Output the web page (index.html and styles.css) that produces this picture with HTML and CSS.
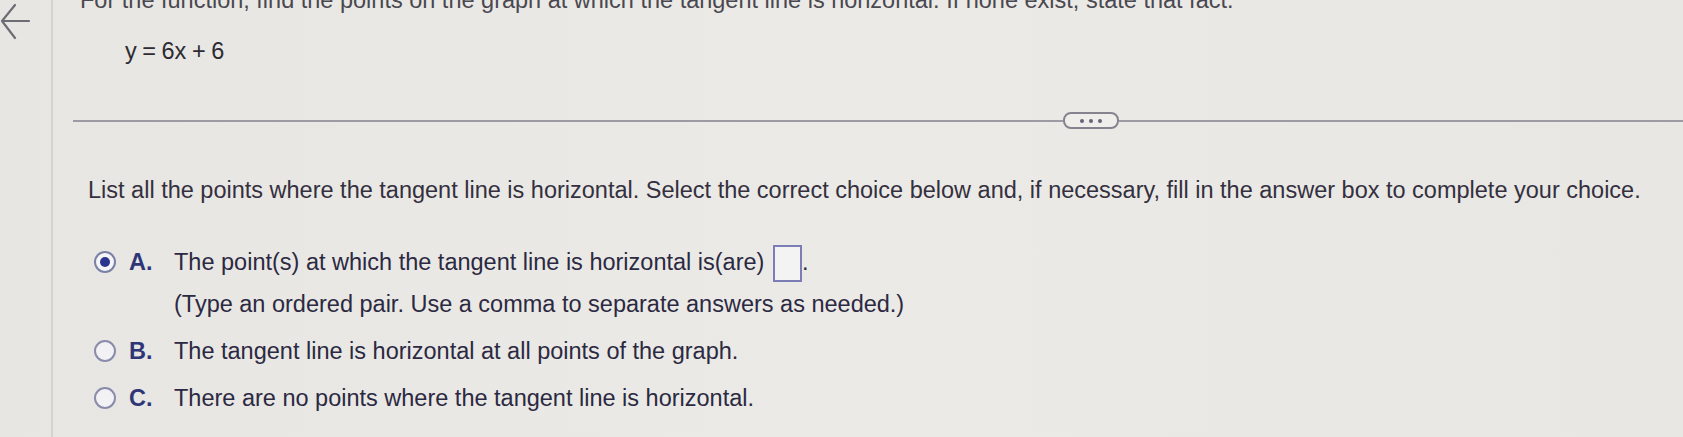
FILE: index.html
```html
<!DOCTYPE html>
<html lang="en">
<head>
    <meta charset="UTF-8">
    <title>Horizontal tangent</title>
    <link rel="stylesheet" href="styles.css">
</head>
<body>
    <div class="page">
        <div class="side">
            <svg class="back" width="30" height="42" viewBox="0 0 30 42">
                <path d="M29 21 H2 M15 5 L2 21 L15 38" fill="none" stroke="#6d6d74" stroke-width="2.2" stroke-linecap="round" stroke-linejoin="round"/>
            </svg>
        </div>
        <div class="main">
            <p class="intro">For the function, find the points on the graph at which the tangent line is horizontal. If none exist, state that fact.</p>
            <div class="equation">y = 6x + 6</div>

            <div class="divider">
                <span class="rule left"></span>
                <span class="more"><i></i><i></i><i></i></span>
                <span class="rule"></span>
            </div>

            <p class="question">List all the points where the tangent line is horizontal. Select the correct choice below and, if necessary, fill in the answer box to complete your choice.</p>

            <div class="choices">
                <div class="choice">
                    <span class="radio checked"></span>
                    <span class="letter">A.</span>
                    <div class="text">
                        <div class="line">The point(s) at which the tangent line is horizontal is(are) <span class="answer"></span>.</div>
                        <div>(Type an ordered pair. Use a comma to separate answers as needed.)</div>
                    </div>
                </div>
                <div class="choice">
                    <span class="radio"></span>
                    <span class="letter">B.</span>
                    <div class="text">The tangent line is horizontal at all points of the graph.</div>
                </div>
                <div class="choice">
                    <span class="radio"></span>
                    <span class="letter">C.</span>
                    <div class="text">There are no points where the tangent line is horizontal.</div>
                </div>
            </div>
        </div>
    </div>
</body>
</html>
```

FILE: styles.css
```css
body {
    margin: 0;
    font-family: 'Liberation Sans', Arial, sans-serif;
    font-size: 23.5px;
    line-height: 26px;
    background: linear-gradient(90deg, #e7e6e2, #ebeae6 50%, #e8e7e3);
    color: #35323f;
    height: 437px;
    overflow: hidden;
}

.page {
    display: flex;
    height: 100%;
}

.side {
    width: 51px;
    border-right: 2px solid #d4d3cf;
    flex-shrink: 0;
}

.back {
    display: block;
}

.main {
    flex: 1;
    padding-left: 20px;
}

.intro {
    margin: -13px 0 0 7px;
    color: #4a4850;
    white-space: nowrap;
}

.equation {
    margin: 25px 0 0 52px;
    word-spacing: -1px;
    color: #2d2b33;
}

/* разделитель с кнопкой */
.divider {
    display: flex;
    align-items: center;
    margin-top: 48px;
}

.rule {
    flex: 1;
    height: 2px;
    background: #9c9ba3;
}

.rule.left {
    flex: 0 0 990px;
}

.more {
    width: 52px;
    height: 13px;
    border: 2px solid #85848e;
    border-radius: 8px;
    display: flex;
    justify-content: center;
    align-items: center;
    gap: 5px;
    background: #efeeeb;
}

.more i {
    width: 4px;
    height: 4px;
    border-radius: 50%;
    background: #65647a;
}

.question {
    margin: 48px 0 0 15px;
    color: #34303f;
    white-space: nowrap;
}

.choices {
    margin: 46px 0 0 21px;
}

.choice {
    display: flex;
    align-items: flex-start;
    color: #2c2942;
    margin-bottom: 21px;
}

.radio {
    width: 18px;
    height: 18px;
    border: 2px solid #8a8cab;
    border-radius: 50%;
    background: #f2f2f4;
    margin-top: 2px;
    flex-shrink: 0;
    box-sizing: content-box;
    position: relative;
}

.radio.checked {
    border-color: #7b80a6;
    background: #f5f5f8;
}

.radio.checked::after {
    content: '';
    position: absolute;
    left: 4px;
    top: 4px;
    width: 10px;
    height: 10px;
    border-radius: 50%;
    background: #2b3590;
}

.letter {
    font-weight: bold;
    color: #2e3678;
    width: 45px;
    margin-left: 13px;
}

.text .line {
    margin-bottom: 15px;
}

.answer {
    display: inline-block;
    width: 25px;
    height: 33px;
    border: 2px solid #7d7db6;
    vertical-align: middle;
    margin: -6px 0 -6px 2px;
    background: #f3f3f3;
}
```
